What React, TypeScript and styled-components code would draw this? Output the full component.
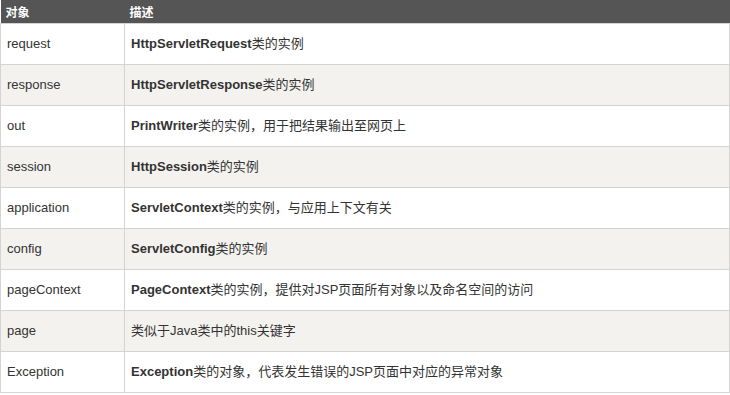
import styled, { createGlobalStyle } from 'styled-components';

const GlobalStyle = createGlobalStyle`
  body {
    margin: 0;
    background: #fff;
    font-family: "Liberation Sans", Arial, "Noto Sans CJK SC", sans-serif;
  }
`;

const Table = styled.table`
  width: 730px;
  border-collapse: collapse;
  table-layout: fixed;
  font-size: 13px;
  color: #333;
`;

const HeadCell = styled.th`
  height: 23px;
  padding: 0 5px;
  background: #555;
  color: #fff;
  font-size: 12px;
  font-weight: bold;
  text-align: left;
  border: 0;
  font-family: "Noto Sans CJK SC", sans-serif;
`;

const Row = styled.tr<{ $alt: boolean }>`
  background: ${(p) => (p.$alt ? '#f3f2ef' : '#fff')};
`;

const Cell = styled.td`
  height: 40px;
  padding: 0 6px;
  border: 1px solid #d4d4d4;
  vertical-align: middle;
  line-height: 16px;
`;

const Name = styled.b`
  font-weight: bold;
  color: #333;
`;

const rows: { obj: string; bold?: string; desc: string }[] = [
  { obj: 'request', bold: 'HttpServletRequest', desc: '类的实例' },
  { obj: 'response', bold: 'HttpServletResponse', desc: '类的实例' },
  { obj: 'out', bold: 'PrintWriter', desc: '类的实例，用于把结果输出至网页上' },
  { obj: 'session', bold: 'HttpSession', desc: '类的实例' },
  { obj: 'application', bold: 'ServletContext', desc: '类的实例，与应用上下文有关' },
  { obj: 'config', bold: 'ServletConfig', desc: '类的实例' },
  {
    obj: 'pageContext',
    bold: 'PageContext',
    desc: '类的实例，提供对JSP页面所有对象以及命名空间的访问',
  },
  { obj: 'page', desc: '类似于Java类中的this关键字' },
  {
    obj: 'Exception',
    bold: 'Exception',
    desc: '类的对象，代表发生错误的JSP页面中对应的异常对象',
  },
];

export default function App() {
  return (
    <>
      <GlobalStyle />
      <Table>
        <colgroup>
          <col style={{ width: 124 }} />
          <col />
        </colgroup>
        <thead>
          <tr>
            <HeadCell>对象</HeadCell>
            <HeadCell>描述</HeadCell>
          </tr>
        </thead>
        <tbody>
          {rows.map((r, i) => (
            <Row key={r.obj} $alt={i % 2 === 1}>
              <Cell>{r.obj}</Cell>
              <Cell>
                {r.bold && <Name>{r.bold}</Name>}
                {r.desc}
              </Cell>
            </Row>
          ))}
        </tbody>
      </Table>
    </>
  );
}
